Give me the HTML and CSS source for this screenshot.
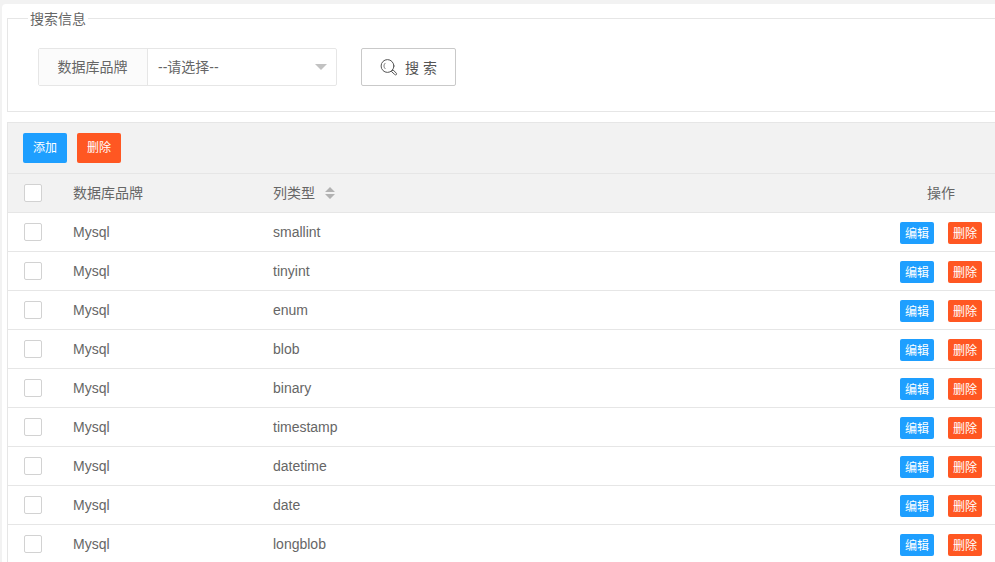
FILE: index.html
```html
<!DOCTYPE html>
<html lang="zh-CN">
<head>
<meta charset="utf-8">
<title>列类型</title>
<link rel="stylesheet" href="styles.css">
</head>
<body>
<main class="card">
  <fieldset class="search">
    <legend class="search-title">搜索信息</legend>
    <form class="search-form">
      <div class="field">
        <span class="field-label">数据库品牌</span>
        <div class="field-select"><span>--请选择--</span><i class="caret"></i></div>
      </div>
      <button type="button" class="search-btn">
        <svg class="search-icon" width="18" height="18" viewBox="0 0 18 18" fill="none" stroke="#555" stroke-linecap="round">
          <circle cx="7.500" cy="7" r="6.4"/>
          <path d="M5.200 9.700C3.500 8.200 3.500 5.600 5.200 4.200" stroke-width=".8"/>
          <path d="M11.700 12.200l1.400-1.300 3.200 3.300c1 1.100-.5 2.500-1.500 1.400z" stroke-width="1"/>
        </svg>
        <span>搜 索</span>
      </button>
    </form>
  </fieldset>
  <section class="grid">
    <div class="toolbar">
      <button type="button" class="btn blue">添加</button>
      <button type="button" class="btn red">删除</button>
    </div>
    <div class="row head">
      <div class="check"><i class="box"></i></div>
      <div class="cell">数据库品牌</div>
      <div class="cell">列类型
        <svg class="sort" width="10" height="12" viewBox="0 0 10 12" fill="#b2b2b2"><path d="M0 5L5 0l5 5zM0 7h10l-5 5z"/></svg>
      </div>
      <div class="ops">操作</div>
    </div>
    <div id="rows"></div>
  </section>
</main>
<script src="rows.js"></script>
</body>
</html>
```
FILE: styles.css
```css
* { box-sizing: border-box; }
body {
  margin: 0;
  height: 562px;
  overflow: hidden;
  padding: 4px 0 0 2px;
  background: #f2f2f2;
  color: #666;
  font: 14px/24px "Liberation Sans", "Noto Sans CJK SC", sans-serif;
}
button { font-family: inherit; margin: 0; padding: 0; }
.card {
  height: 558px;
  overflow: hidden;
  padding: 4px 0 0 5px;
  background: #fff;
  border-radius: 4px 0 0 0;
}
.search {
  height: 104px;
  min-width: 0;
  margin: 0;
  padding: 0 0 0 20px;
  border: 1px solid #e6e6e6;
  border-right: 0;
}
.search-title { padding: 2px 2px 0; line-height: 19px; }
.search-form { display: flex; gap: 24px; padding: 19px 0 0 10px; }
.field { display: flex; width: 299px; height: 38px; border: 1px solid #e6e6e6; border-radius: 2px; }
.field-label {
  width: 109px;
  padding-right: 1px;
  line-height: 36px;
  text-align: center;
  background: #fbfbfb;
  border-right: 1px solid #e6e6e6;
}
.field-select {
  flex: 1;
  display: flex;
  align-items: center;
  justify-content: space-between;
  padding: 0 9px 0 10px;
}
.caret { border: 6px solid transparent; border-top-color: #c2c2c2; border-bottom: 0; }
.search-btn {
  display: flex;
  align-items: center;
  width: 95px;
  height: 38px;
  padding-left: 18px;
  gap: 7px;
  font-size: 14px;
  color: #555;
  background: #fff;
  border: 1px solid #c9c9c9;
  border-radius: 2px;
}
.search-icon { margin-top: 2px; }
.grid { margin-top: 10px; border: 1px solid #e6e6e6; border-right: 0; }
.toolbar {
  display: flex;
  gap: 10px;
  height: 51px;
  padding: 10px 15px;
  background: #f2f2f2;
  border-bottom: 1px solid #e6e6e6;
}
.btn {
  width: 44px;
  height: 30px;
  color: #fff;
  font-size: 12px;
  line-height: 30px;
  border: 0;
  border-radius: 2px;
}
.small { width: 34px; height: 22px; padding-top: 2px; line-height: 20px; }
.blue { background: #1e9fff; }
.red { background: #ff5722; }
.row {
  display: grid;
  grid-template-columns: 50px 200px 628px 110px;
  height: 39px;
  line-height: 38px;
  border-bottom: 1px solid #e6e6e6;
}
.head { background: #f2f2f2; }
.check { padding: 10px 0 0 16px; }
.box { display: block; width: 18px; height: 18px; background: #fff; border: 1px solid #d2d2d2; border-radius: 2px; }
.cell { padding: 0 15px; }
.sort { margin-left: 6px; vertical-align: -1px; }
.ops { display: flex; justify-content: center; gap: 14px; }
.ops .btn { margin-top: 9px; }
```
FILE: rows.js
```js
const types = ["smallint", "tinyint", "enum", "blob", "binary", "timestamp", "datetime", "date", "longblob"];
document.getElementById("rows").innerHTML = types.map(type => `
  <div class="row">
    <div class="check"><i class="box"></i></div>
    <div class="cell">Mysql</div>
    <div class="cell">${type}</div>
    <div class="ops">
      <button type="button" class="btn small blue">编辑</button>
      <button type="button" class="btn small red">删除</button>
    </div>
  </div>`).join("");
```
